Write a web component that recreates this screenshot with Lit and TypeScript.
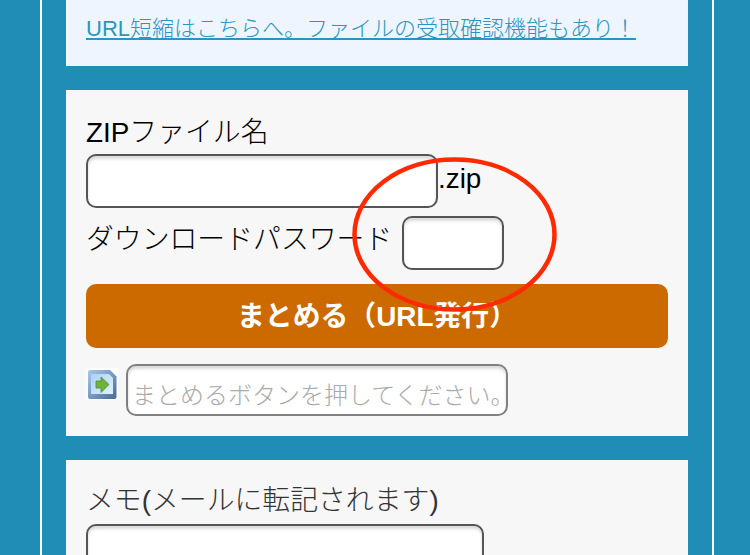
import { LitElement, html, css } from "lit";
import { customElement } from "lit/decorators.js";

@customElement("app-root")
export class AppRoot extends LitElement {
  static styles = css`
    :host {
      display: block;
      position: relative;
      width: 750px;
      height: 555px;
      overflow: hidden;
      background: #1f8db5;
      font-family: "Liberation Sans", "Noto Sans CJK JP", sans-serif;
      font-weight: 300;
      color: #000;
    }
    .frame {
      box-sizing: border-box;
      height: 555px;
      margin: 0 36px 0 40px;
      padding: 0 24px;
      border-left: 2px solid #fff;
      border-right: 2px solid #fff;
      display: flex;
      flex-direction: column;
      gap: 24px;
    }
    .panel {
      flex: none;
      box-sizing: border-box;
      background: #f7f7f7;
      padding: 0 20px;
      display: flex;
      flex-direction: column;
    }
    .top {
      height: 66px;
      background: #eff5ff;
      padding-top: 14px;
    }
    .top a {
      font-size: 22px;
      line-height: 30px;
      color: #2a96c0;
      text-decoration: underline;
    }
    .form {
      height: 346px;
      padding-top: 26px;
    }
    .label {
      flex: none;
      font-size: 27.85px;
      line-height: 34px;
      height: 38px;
    }
    .row {
      flex: none;
      display: flex;
      align-items: center;
    }
    .field {
      flex: none;
      box-sizing: border-box;
      display: block;
      height: 54px;
      margin: 0;
      padding: 4px;
      background: #fff;
      border: 2px solid #555;
      border-radius: 10px;
      box-shadow: inset 0 3px 3px rgba(0, 0, 0, 0.14);
      font: inherit;
      font-size: 24px;
      outline: none;
    }
    .name {
      width: 352px;
    }
    .ext {
      font-size: 27.85px;
      line-height: 34px;
      margin-top: -4px;
    }
    .pass-row {
      margin-top: 8px;
    }
    .pass-label {
      font-size: 27.85px;
      line-height: 34px;
      width: 316px;
      margin-top: -6px;
      white-space: nowrap;
    }
    .pass {
      width: 102px;
    }
    .submit {
      flex: none;
      display: block;
      box-sizing: border-box;
      width: 100%;
      height: 64px;
      margin: 14px 0 0;
      padding: 0 0 4px;
      border: 0;
      border-radius: 10px;
      background: #cc6a00;
      color: #fff;
      font: inherit;
      font-size: 27.85px;
      font-weight: 700;
    }
    .result-row {
      margin-top: 16px;
      align-items: flex-start;
      gap: 8px;
    }
    .icon {
      display: block;
      flex: none;
      width: 32px;
      height: 32px;
      margin-top: 4px;
    }
    .result {
      width: 382px;
      height: 52px;
      padding: 12px 4px 0;
      border-color: #808080;
    }
    .result::placeholder {
      color: #aaa;
      opacity: 1;
    }
    .memo {
      height: 160px;
      padding-top: 24px;
    }
    .memo .label {
      color: #333;
      height: 40px;
      padding-top: 0;
    }
    .memo-field {
      width: 398px;
      height: 80px;
    }
    .mark {
      position: absolute;
      left: 352px;
      top: 157px;
      width: 205px;
      height: 155px;
      pointer-events: none;
    }
  `;

  render() {
    return html`
      <div class="frame">
        <section class="panel top">
          <div><a href="#">URL短縮はこちらへ。ファイルの受取確認機能もあり！</a></div>
        </section>
        <section class="panel form">
          <div class="label">ZIPファイル名</div>
          <div class="row">
            <input class="field name" type="text" />
            <span class="ext">.zip</span>
          </div>
          <div class="row pass-row">
            <span class="pass-label">ダウンロードパスワード</span>
            <input class="field pass" type="text" />
          </div>
          <button class="submit">まとめる（URL発行）</button>
          <div class="row result-row">
            <svg class="icon" viewBox="0 0 32 32" aria-hidden="true">
              <defs>
                <linearGradient id="pg" x1="0" y1="0" x2="1" y2="1">
                  <stop offset="0" stop-color="#a4c8ea" />
                  <stop offset="1" stop-color="#4a6a98" />
                </linearGradient>
                <linearGradient id="ig" x1="0" y1="0" x2="1" y2="1">
                  <stop offset="0" stop-color="#a9d2f4" />
                  <stop offset="1" stop-color="#e2f1fd" />
                </linearGradient>
              </defs>
              <rect width="32" height="32" fill="#fdfeff" />
              <path d="M2 4 Q2 2 4 2 H24 L30.5 8.5 V29 Q30.5 31 28.5 31 H4 Q2 31 2 29 Z" fill="url(#pg)" />
              <path d="M5 6 H23 L27 10 V26 H5 Z" fill="url(#ig)" />
              <path d="M10 13 H15 V9 L23 16.5 L15 24.5 V20 H10 Z" fill="#6fb23c" stroke="#4f8c2a" stroke-width="0.8" />
            </svg>
            <input class="field result" type="text" placeholder="まとめるボタンを押してください。" />
          </div>
        </section>
        <section class="panel memo">
          <div class="label">メモ(メールに転記されます)</div>
          <input class="field memo-field" type="text" />
        </section>
      </div>
      <svg class="mark" viewBox="0 0 205 155" aria-hidden="true">
        <ellipse cx="102.5" cy="77.5" rx="100" ry="75" fill="none" stroke="#ff2a00" stroke-width="4.5" />
      </svg>
    `;
  }
}
